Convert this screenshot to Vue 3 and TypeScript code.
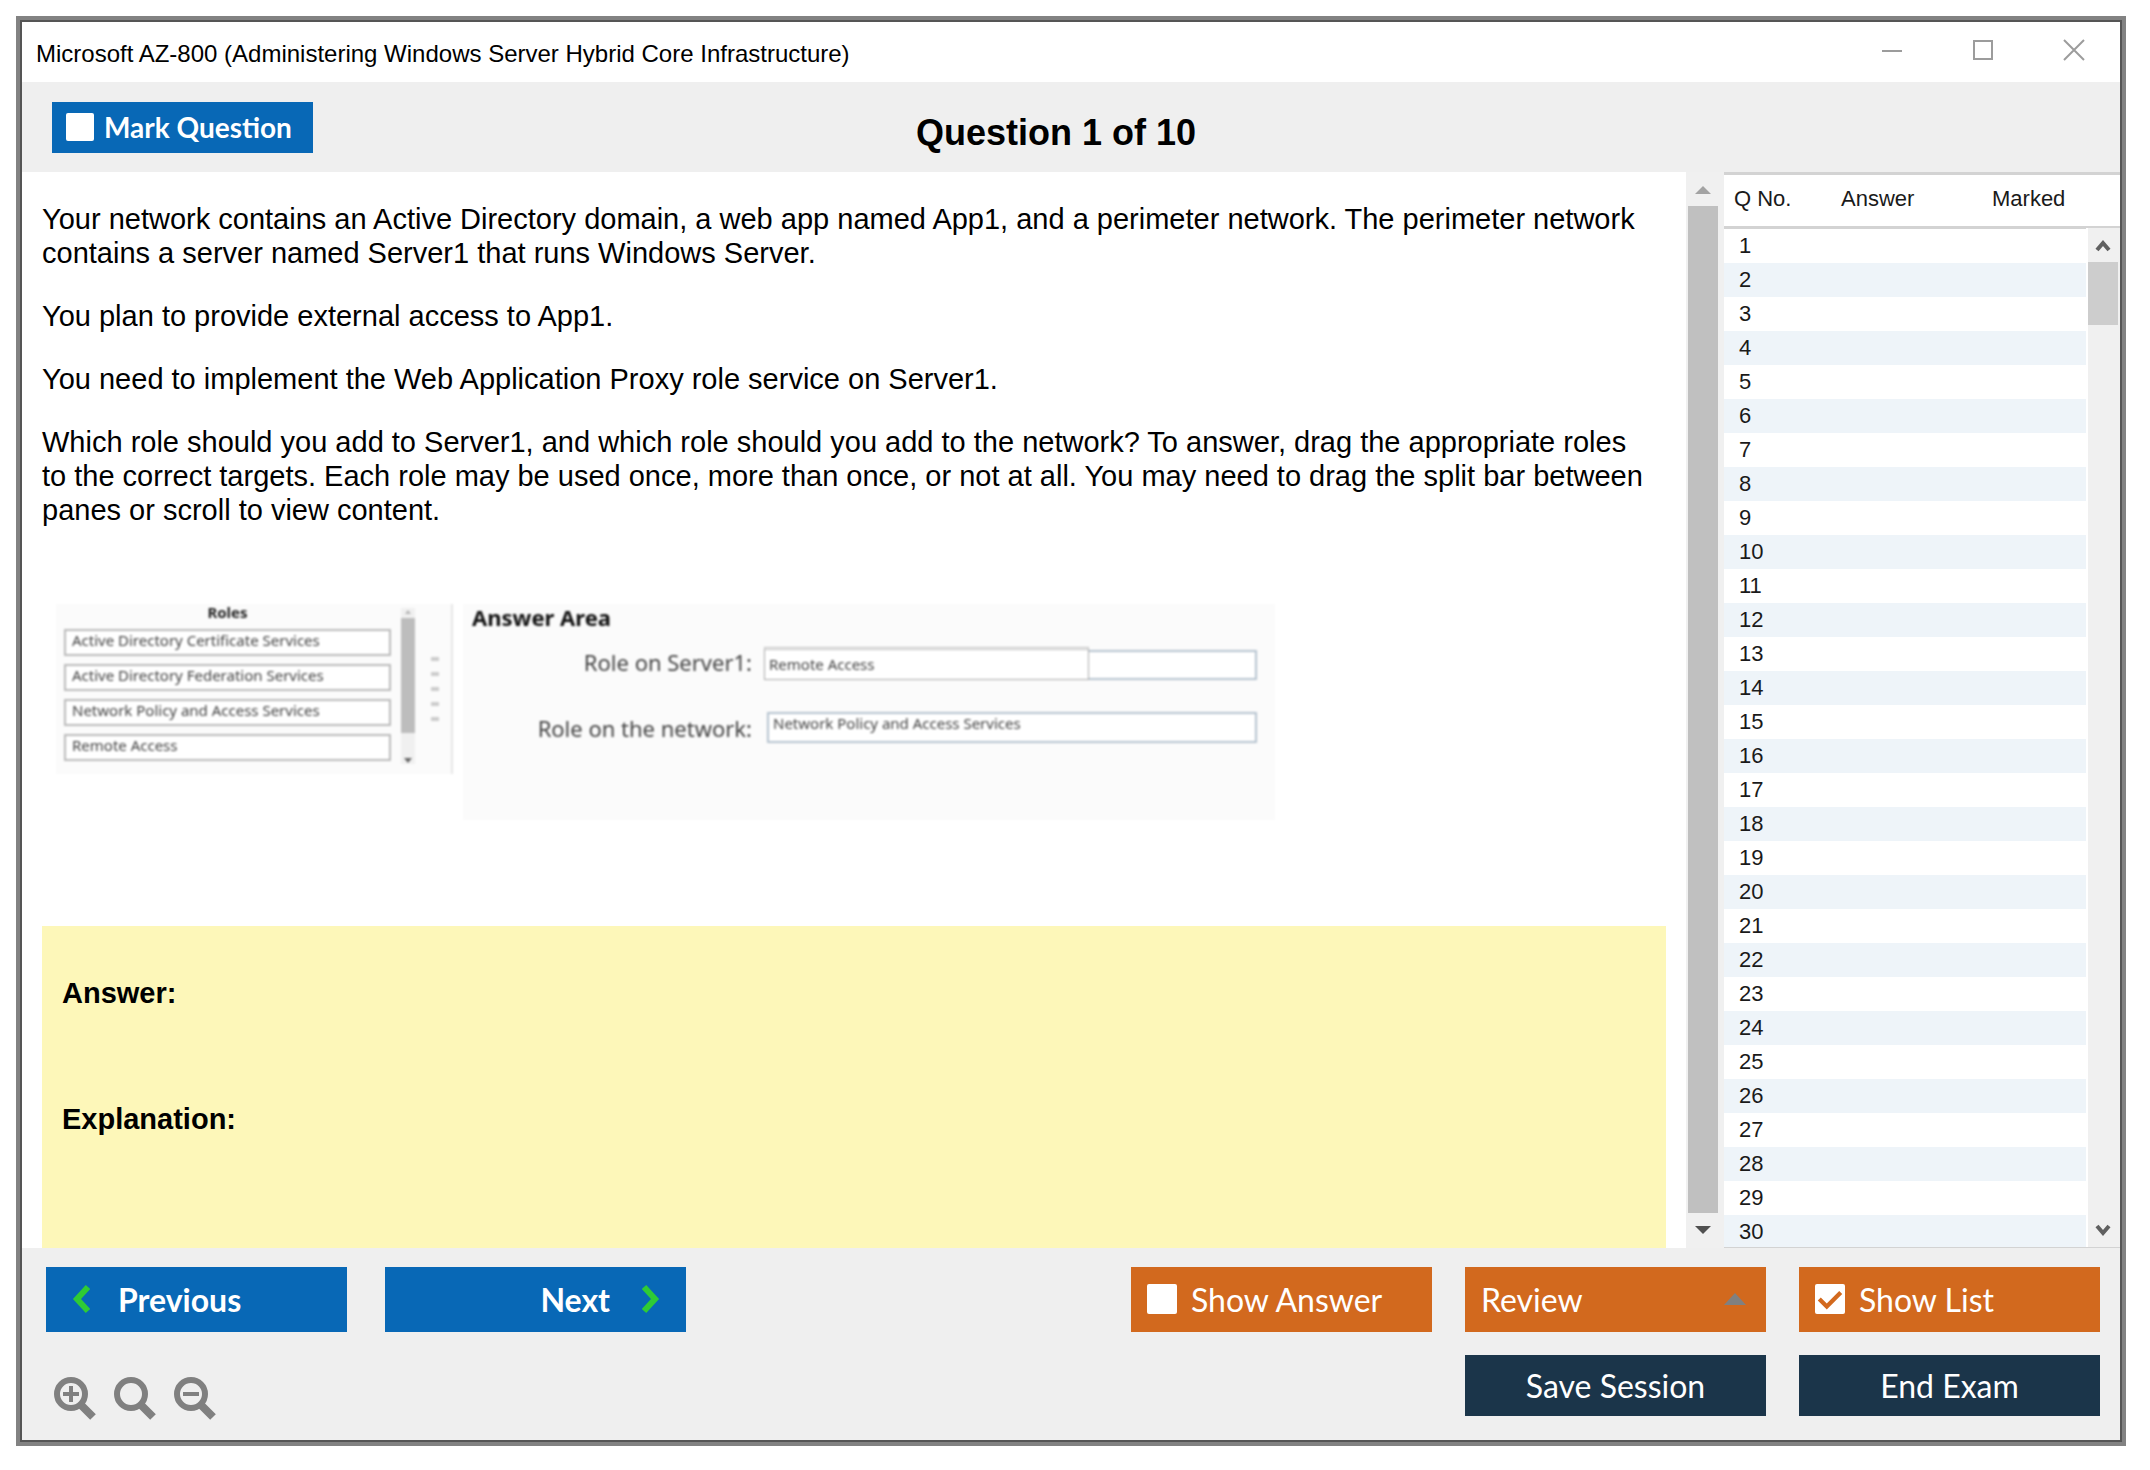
<script setup lang="ts">
import { ref } from 'vue'

const marked = ref(false)
const showAnswer = ref(false)
const showList = ref(true)

const questionNumbers: number[] = Array.from({ length: 30 }, (_, i) => i + 1)

const paragraphs: string[] = [
  'Your network contains an Active Directory domain, a web app named App1, and a perimeter network. The perimeter network contains a server named Server1 that runs Windows Server.',
  'You plan to provide external access to App1.',
  'You need to implement the Web Application Proxy role service on Server1.',
  'Which role should you add to Server1, and which role should you add to the network? To answer, drag the appropriate roles to the correct targets. Each role may be used once, more than once, or not at all. You may need to drag the split bar between panes or scroll to view content.',
]

const roles: string[] = [
  'Active Directory Certificate Services',
  'Active Directory Federation Services',
  'Network Policy and Access Services',
  'Remote Access',
]
</script>

<template>
  <div class="window">
    <header class="titlebar">
      <span class="title">Microsoft AZ-800 (Administering Windows Server Hybrid Core Infrastructure)</span>
      <div class="controls">
        <button type="button" aria-label="Minimize">
          <svg width="22" height="22" viewBox="0 0 22 22"><path d="M1 12H21" /></svg>
        </button>
        <button type="button" aria-label="Maximize">
          <svg width="22" height="22" viewBox="0 0 22 22"><path d="M2 2H20V20H2Z" /></svg>
        </button>
        <button type="button" aria-label="Close">
          <svg width="22" height="22" viewBox="0 0 22 22"><path d="M1 1L21 21M21 1L1 21" /></svg>
        </button>
      </div>
    </header>

    <div class="toolbar">
      <label class="mark"><input v-model="marked" type="checkbox" class="check" />Mark Question</label>
      <h1>Question 1 of 10</h1>
    </div>

    <div class="content">
      <main class="question">
        <p v-for="text in paragraphs" :key="text">{{ text }}</p>

        <div class="exhibit">
          <section class="roles">
            <div class="role-column">
              <h2>Roles</h2>
              <ul>
                <li v-for="role in roles" :key="role" draggable="true">{{ role }}</li>
              </ul>
            </div>
            <div class="mini-scroll">
              <svg width="14" height="8" viewBox="0 0 14 8"><path d="M7 2L10 6H4Z" fill="#b4b4b4" /></svg>
              <div class="mini-thumb"></div>
              <svg width="14" height="8" viewBox="0 0 14 8"><path d="M7 7L3 2H11Z" fill="#666" /></svg>
            </div>
            <div class="split"><i v-for="n in 5" :key="n"></i></div>
          </section>
          <section class="targets">
            <h2>Answer Area</h2>
            <div class="target">
              <span class="target-name">Role on Server1:</span>
              <div class="slot first"><span class="dropped">Remote Access</span><span class="rest"></span></div>
            </div>
            <div class="target">
              <span class="target-name">Role on the network:</span>
              <div class="slot second">Network Policy and Access Services</div>
            </div>
          </section>
        </div>

        <section class="answer">
          <h3>Answer:</h3>
          <h3>Explanation:</h3>
        </section>
      </main>

      <div class="scrollbar">
        <svg width="30" height="34" viewBox="0 0 30 34"><path d="M7 22L15 14L23 22Z" fill="#a3a3a3" /></svg>
        <div class="thumb"></div>
        <svg width="30" height="35" viewBox="0 0 30 35"><path d="M7 13H23L15 21Z" fill="#505050" /></svg>
      </div>

      <aside class="list">
        <table>
          <colgroup><col class="c1" /><col class="c2" /><col /></colgroup>
          <thead>
            <tr><th scope="col">Q No.</th><th scope="col">Answer</th><th scope="col">Marked</th></tr>
          </thead>
          <tbody>
            <tr v-for="n in questionNumbers" :key="n"><td>{{ n }}</td><td></td><td></td></tr>
          </tbody>
        </table>
        <div class="list-scroll">
          <svg width="30" height="34" viewBox="0 0 30 34"><path d="M9 22L15 15L21 22" /></svg>
          <div class="list-thumb"></div>
          <svg width="30" height="34" viewBox="0 0 30 34"><path d="M9 13L15 20L21 13" /></svg>
        </div>
      </aside>
    </div>

    <footer class="footer">
      <div class="left">
        <div class="row">
          <button type="button" class="nav prev">
            <svg width="20" height="30" viewBox="0 0 20 30"><path d="M16 3L5 15L16 27" /></svg>Previous
          </button>
          <button type="button" class="nav next">
            Next<svg width="20" height="30" viewBox="0 0 20 30"><path d="M4 3L15 15L4 27" /></svg>
          </button>
        </div>
        <div class="zoom">
          <button type="button" aria-label="Zoom in">
            <svg width="42" height="44" viewBox="0 0 42 44"><circle cx="17" cy="18" r="14" /><path d="M27 29L39 41" class="handle" /><path d="M9 18H25M17 10V26" class="sign" /></svg>
          </button>
          <button type="button" aria-label="Reset zoom">
            <svg width="42" height="44" viewBox="0 0 42 44"><circle cx="17" cy="18" r="14" /><path d="M27 29L39 41" class="handle" /></svg>
          </button>
          <button type="button" aria-label="Zoom out">
            <svg width="42" height="44" viewBox="0 0 42 44"><circle cx="17" cy="18" r="14" /><path d="M27 29L39 41" class="handle" /><path d="M9 18H25" class="sign" /></svg>
          </button>
        </div>
      </div>
      <div class="right">
        <label class="action"><input v-model="showAnswer" type="checkbox" class="check" />Show Answer</label>
        <button type="button" class="action review" aria-haspopup="menu">
          Review<svg width="22" height="12" viewBox="0 0 22 12"><path d="M0 12L11 0L22 12Z" fill="#808080" /></svg>
        </button>
        <label class="action"><input v-model="showList" type="checkbox" class="check" />Show List</label>
        <button type="button" class="session save">Save Session</button>
        <button type="button" class="session">End Exam</button>
      </div>
    </footer>
  </div>
</template>

<style>
body {
  margin: 0;
  background: #fff;
}
</style>

<style scoped>
* {
  box-sizing: border-box;
}
.window {
  margin: 16px 24px 24px 16px;
  border: 4px solid #828282;
  outline: 2px solid #555;
  outline-offset: -6px;
  padding: 2px;
  background: #efefef;
  color: #000;
  font-family: "Liberation Sans", Arial, sans-serif;
}
button {
  border: 0;
  padding: 0;
  background: none;
  font: inherit;
  color: inherit;
}
svg {
  display: block;
  flex: none;
}
h1, h2, h3, p, ul {
  margin: 0;
  padding: 0;
}
.titlebar {
  display: flex;
  align-items: center;
  justify-content: space-between;
  height: 60px;
  padding: 0 35px 0 14px;
  background: #fff;
}
.title {
  font-size: 24px;
  padding-top: 4px;
}
.controls {
  display: flex;
  gap: 69px;
  padding-bottom: 4px;
}
.controls path {
  fill: none;
  stroke: #9c9c9c;
  stroke-width: 2;
}
.toolbar {
  display: grid;
  grid-template-columns: 1fr auto 1fr;
  align-items: center;
  height: 90px;
  padding: 0 60px 0 30px;
}
.mark {
  justify-self: start;
  display: flex;
  align-items: center;
  gap: 10px;
  width: 261px;
  height: 51px;
  padding-left: 14px;
  background: #0868b6;
  color: #fff;
  font: 700 28px Lato, "Open Sans", sans-serif;
}
h1 {
  font-size: 36px;
  line-height: 40px;
  padding-top: 12px;
}
.check {
  appearance: none;
  flex: none;
  margin: 0;
  width: 28px;
  height: 28px;
  border-radius: 2px;
  background: #fff;
}
.action .check {
  width: 30px;
  height: 30px;
}
.check:checked {
  background: #fff url("data:image/svg+xml,%3Csvg xmlns='http://www.w3.org/2000/svg' viewBox='0 0 28 28'%3E%3Cpath d='M4 14L11 21L24 8' fill='none' stroke='%23d2691e' stroke-width='4'/%3E%3C/svg%3E");
}
.content {
  display: flex;
}
.question {
  flex: 1;
  min-width: 0;
  display: flex;
  flex-direction: column;
  padding: 30px 20px 0;
  background: #fff;
}
p {
  margin: 0 12px 29px 0;
  font-size: 29px;
  line-height: 34px;
}
.exhibit {
  display: flex;
  align-items: flex-start;
  gap: 10px;
  margin: 48px 0 106px 14px;
  font-family: "Noto Sans", "Open Sans", sans-serif;
  color: #444;
  filter: blur(1px);
}
.roles {
  display: flex;
  width: 397px;
  height: 170px;
  padding: 0 0 0 8px;
  background: #fbfbfb;
  border-right: 2px solid #e6e6e6;
}
.role-column {
  width: 327px;
}
.role-column h2 {
  font-size: 15px;
  line-height: 16px;
  text-align: center;
  color: #222;
}
ul {
  list-style: none;
  display: flex;
  flex-direction: column;
  gap: 8px;
  margin-top: 9px;
}
li {
  height: 27px;
  padding-left: 6px;
  border: 2px solid #bbb;
  background: #fff;
  font-size: 15px;
  line-height: 18px;
}
.mini-scroll {
  display: flex;
  flex-direction: column;
  width: 14px;
  margin: 4px 16px 10px 10px;
  background: #f0f0f0;
}
.mini-thumb {
  height: 115px;
  margin: 2px 0 auto;
  background: #bdbdbd;
}
.split {
  display: flex;
  flex-direction: column;
  justify-content: center;
  gap: 11px;
}
.split i {
  width: 8px;
  height: 4px;
  background: #ccc;
}
.targets {
  width: 812px;
  height: 216px;
  padding: 0 18px 0 9px;
  background: #fbfbfb;
}
.targets h2 {
  font-size: 22px;
  line-height: 26px;
  margin-bottom: 12px;
  color: #111;
}
.target {
  display: flex;
  height: 66px;
}
.target-name {
  width: 280px;
  margin-right: 12px;
  text-align: right;
  font-size: 22px;
  line-height: 40px;
}
.slot {
  flex: 1;
  display: flex;
  font-size: 15px;
}
.first {
  height: 38px;
  padding-top: 5px;
}
.dropped {
  width: 325px;
  height: 33px;
  padding-left: 4px;
  border: 1px solid #aaa;
  border-top: 3px double #bbb;
  background: #fff;
  line-height: 28px;
}
.rest {
  flex: 1;
  margin-top: 3px;
  height: 30px;
  border: 2px solid #b6c3cf;
  border-left: 0;
  background: #fff;
}
.second {
  height: 31px;
  margin: 4px 0 0 3px;
  padding-left: 4px;
  border: 2px solid #b6c3cf;
  background: #fff;
  line-height: 18px;
}
.answer {
  flex: 1;
  padding: 50px 20px 0;
  background: #fdf7b9;
}
h3 {
  font-size: 29px;
  line-height: 34px;
  margin-bottom: 92px;
}
.answer h3:last-child {
  margin-bottom: 0;
}
.scrollbar {
  display: flex;
  flex-direction: column;
  width: 38px;
  padding: 0 6px 0 2px;
  background: #f0f0f0;
}
.thumb {
  flex: 1;
  background: #c0c0c0;
}
.list {
  position: relative;
  overflow: hidden;
  width: 396px;
  border-top: 3px solid #d3d3d3;
  border-bottom: 1px solid #d3d3d3;
  background: #fff;
  font-size: 22px;
  color: #1a1a1a;
}
table {
  width: 100%;
  margin-bottom: -2px;
  table-layout: fixed;
  border-collapse: collapse;
}
.c1 {
  width: 117px;
}
.c2 {
  width: 151px;
}
th {
  height: 52px;
  padding: 0 0 2px;
  border-bottom: 3px solid #d3d3d3;
  font-weight: 400;
  text-align: left;
}
th:first-child {
  padding-left: 10px;
}
td {
  height: 34px;
  padding: 0;
  line-height: 34px;
}
td:first-child {
  padding-left: 15px;
}
tbody tr:nth-child(even) {
  background: #eef4f9;
}
.list-scroll {
  position: absolute;
  top: 53px;
  right: 0;
  bottom: 0;
  display: flex;
  flex-direction: column;
  width: 34px;
  border-left: 2px solid #fff;
  background: #f0f0f0;
}
.list-scroll path {
  fill: none;
  stroke: #606060;
  stroke-width: 4;
}
.list-thumb {
  width: 30px;
  height: 63px;
  margin-bottom: auto;
  background: #cdcdcd;
}
.footer {
  display: flex;
  justify-content: space-between;
  height: 192px;
  padding: 19px 20px 0 24px;
}
.row {
  display: flex;
  gap: 38px;
}
.nav {
  display: flex;
  align-items: center;
  width: 301px;
  height: 65px;
  background: #0868b6;
  color: #fff;
  font: 700 32px Lato, "Open Sans", sans-serif;
}
.nav path {
  fill: none;
  stroke: #2fcb35;
  stroke-width: 6;
}
.prev {
  gap: 26px;
  padding-left: 26px;
}
.next {
  justify-content: flex-end;
  gap: 30px;
  padding-right: 26px;
}
.zoom {
  display: flex;
  gap: 18px;
  margin: 44px 0 0 8px;
}
.zoom svg {
  fill: none;
  stroke: #808080;
  stroke-width: 6;
}
.zoom .handle {
  stroke-width: 8;
}
.zoom .sign {
  stroke-width: 4;
}
.right {
  display: grid;
  grid-template-columns: 301px 301px 301px;
  grid-template-rows: 65px 61px;
  gap: 23px 33px;
}
.action {
  display: flex;
  align-items: center;
  gap: 14px;
  padding: 0 16px;
  background: #d2691e;
  color: #fff;
  font: 400 32px Lato, "Open Sans", sans-serif;
}
.review {
  justify-content: space-between;
  padding-right: 20px;
}
.session {
  background: #1b354a;
  color: #fff;
  font: 400 32px Lato, "Open Sans", sans-serif;
}
.save {
  grid-column: 2;
}
</style>
